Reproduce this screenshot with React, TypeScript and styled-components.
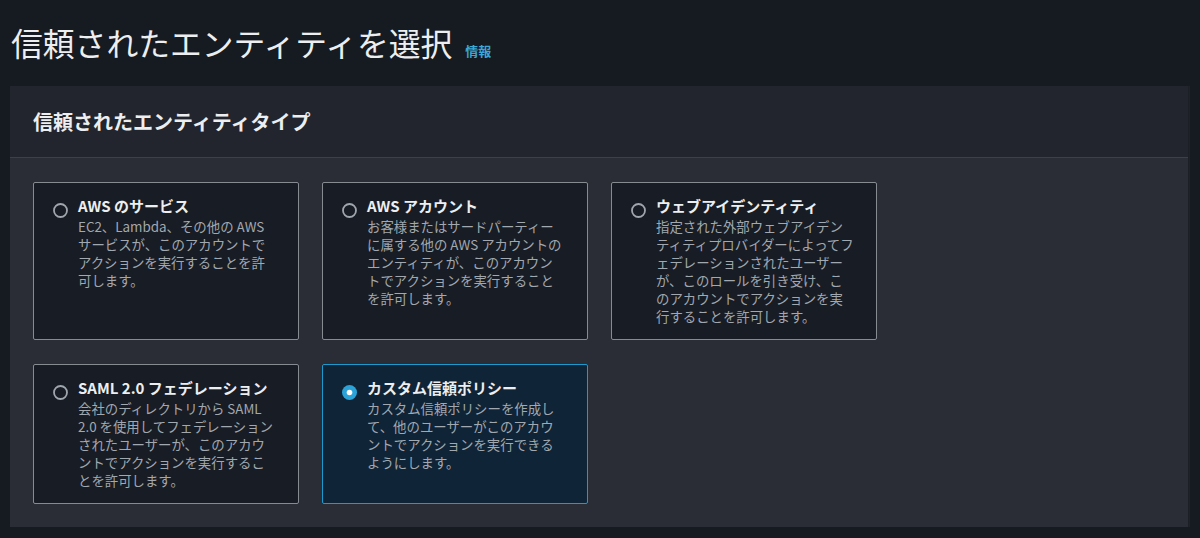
import React from "react";
import styled, { createGlobalStyle } from "styled-components";

const GlobalStyle = createGlobalStyle`
  html, body {
    margin: 0;
    padding: 0;
    background: #161a21;
  }
  body {
    font-family: "Noto Sans CJK JP", "Noto Sans", sans-serif;
    color: #e9ebed;
  }
  * { box-sizing: border-box; }
`;

const Page = styled.div`
  padding: 0 12px 12px 10px;
`;

const HeadingRow = styled.div`
  height: 86px;
  display: flex;
  align-items: baseline;
  padding-top: 20px;
  padding-left: 1px;
`;

const Heading = styled.h1`
  margin: 0;
  font-size: 31.8px;
  line-height: 44px;
  font-weight: 400;
  color: #eceef0;
`;

const InfoLink = styled.a`
  margin-left: 13px;
  font-size: 13px;
  font-weight: 700;
  color: #3aa8d8;
  text-decoration: none;
`;

const Panel = styled.section`
  background: #2a2d35;
  box-shadow: 1px 0 0 #1c1f26, 2px 0 0 #1f2229;
`;

const PanelHeader = styled.header`
  height: 72px;
  background: #22252d;
  border-bottom: 1px solid #3c4048;
  display: flex;
  align-items: center;
  padding: 0 23px 0;
`;

const PanelTitle = styled.h2`
  margin: 0;
  font-size: 20px;
  font-weight: 700;
  color: #eceef0;
`;

const PanelBody = styled.div`
  padding: 24px 23px 23px;
  display: grid;
  grid-template-columns: repeat(3, 266px);
  column-gap: 23px;
  row-gap: 24px;
`;

const Card = styled.label<{ $selected?: boolean }>`
  display: flex;
  gap: 10px;
  padding: 12px 20px 14px 19px;
  border: 1px solid ${(p) => (p.$selected ? "#1b9ad0" : "#868b92")};
  border-radius: 2px;
  background: ${(p) => (p.$selected ? "#0f2436" : "#181c24")};
  cursor: pointer;
`;

const RadioMark = styled.span`
  flex: none;
  width: 15px;
  height: 15px;
  margin-top: 4px;
  display: block;
`;

const CardText = styled.div`
  display: flex;
  flex-direction: column;
`;

const CardTitle = styled.div`
  font-size: 15px;
  line-height: 22px;
  font-weight: 700;
  color: #eceef0;
  white-space: nowrap;
`;

const CardDesc = styled.div`
  font-size: 13.4px;
  line-height: 18px;
  color: #a2a8af;
  white-space: nowrap;
`;

const Radio = ({ checked }: { checked?: boolean }) => (
  <RadioMark>
    <svg width="15" height="15" viewBox="0 0 15 15">
      {checked ? (
        <>
          <circle cx="7.5" cy="7.5" r="7.5" fill="#2ba3d8" />
          <circle cx="7.5" cy="7.5" r="2.8" fill="#ffffff" />
        </>
      ) : (
        <circle cx="7.5" cy="7.5" r="6.5" fill="none" stroke="#a0a6ad" strokeWidth="1.8" />
      )}
    </svg>
  </RadioMark>
);

type Option = { title: string; lines: string[]; selected?: boolean };

const options: Option[] = [
  {
    title: "AWS のサービス",
    lines: [
      "EC2、Lambda、その他の AWS",
      "サービスが、このアカウントで",
      "アクションを実行することを許",
      "可します。",
    ],
  },
  {
    title: "AWS アカウント",
    lines: [
      "お客様またはサードパーティー",
      "に属する他の AWS アカウントの",
      "エンティティが、このアカウン",
      "トでアクションを実行すること",
      "を許可します。",
    ],
  },
  {
    title: "ウェブアイデンティティ",
    lines: [
      "指定された外部ウェブアイデン",
      "ティティプロバイダーによってフ",
      "ェデレーションされたユーザー",
      "が、このロールを引き受け、こ",
      "のアカウントでアクションを実",
      "行することを許可します。",
    ],
  },
  {
    title: "SAML 2.0 フェデレーション",
    lines: [
      "会社のディレクトリから SAML",
      "2.0 を使用してフェデレーション",
      "されたユーザーが、このアカウ",
      "ントでアクションを実行するこ",
      "とを許可します。",
    ],
  },
  {
    title: "カスタム信頼ポリシー",
    selected: true,
    lines: [
      "カスタム信頼ポリシーを作成し",
      "て、他のユーザーがこのアカウ",
      "ントでアクションを実行できる",
      "ようにします。",
    ],
  },
];

export default function App() {
  return (
    <>
      <GlobalStyle />
      <Page>
        <HeadingRow>
          <Heading>信頼されたエンティティを選択</Heading>
          <InfoLink href="#">情報</InfoLink>
        </HeadingRow>
        <Panel>
          <PanelHeader>
            <PanelTitle>信頼されたエンティティタイプ</PanelTitle>
          </PanelHeader>
          <PanelBody>
            {options.map((o) => (
              <Card key={o.title} $selected={o.selected}>
                <Radio checked={o.selected} />
                <CardText>
                  <CardTitle>{o.title}</CardTitle>
                  <CardDesc>
                    {o.lines.map((l, i) => (
                      <React.Fragment key={i}>
                        {i > 0 && <br />}
                        {l}
                      </React.Fragment>
                    ))}
                  </CardDesc>
                </CardText>
              </Card>
            ))}
          </PanelBody>
        </Panel>
      </Page>
    </>
  );
}
